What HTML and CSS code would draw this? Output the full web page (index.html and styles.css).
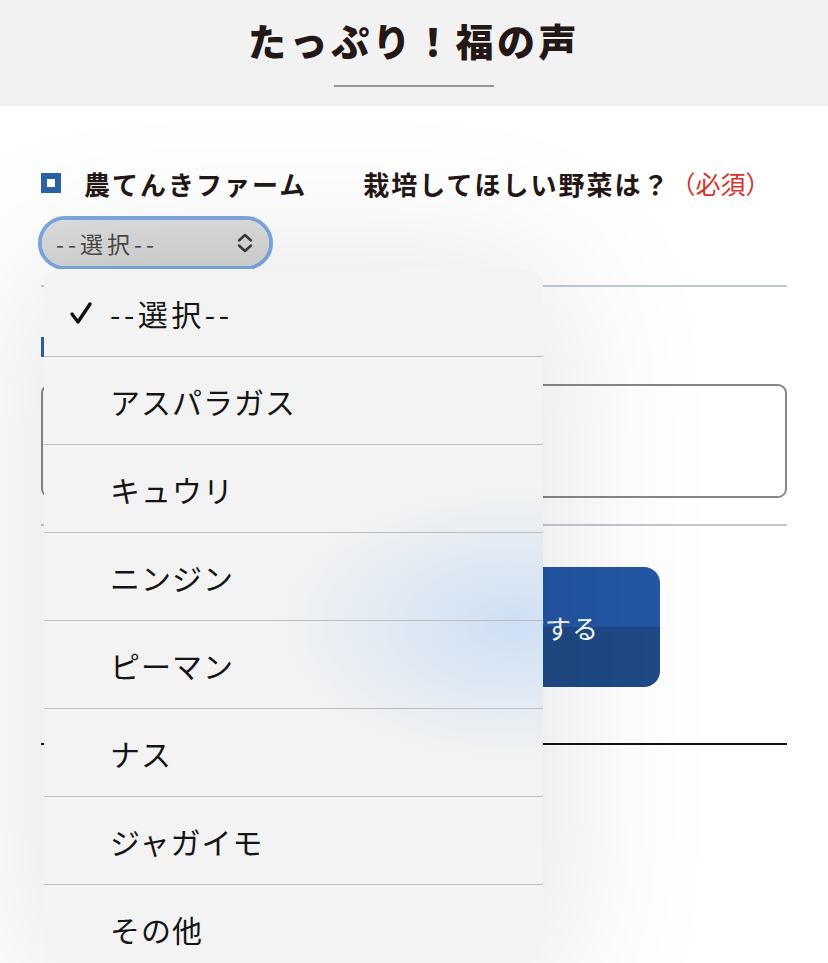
FILE: index.html
```html
<!DOCTYPE html>
<html lang="ja">
<head>
<meta charset="utf-8">
<title>たっぷり！福の声</title>
<link rel="stylesheet" href="styles.css">
</head>
<body>
<header class="hero">
  <h1 class="hero-title">たっぷり！福の声</h1>
  <div class="hero-rule"></div>
</header>
<main class="form">
  <div class="q-label">
    <span class="q-icon"></span>
    <span class="q-farm">農てんきファーム</span>
    <span class="q-text">栽培してほしい野菜は？</span><span class="q-req">（必須）</span>
  </div>
  <div class="select-ring">
    <div class="select">
      <span class="select-value">--選択--</span>
      <svg class="select-chev" width="20" height="22" viewBox="0 0 20 22"><path d="M4 8.5 L10 3 L16 8.5 M4 13.5 L10 19 L16 13.5" fill="none" stroke="#3a3a3a" stroke-width="2.4" stroke-linecap="round" stroke-linejoin="round"/></svg>
    </div>
  </div>
  <div class="rule-light"></div>
  <div class="q-label q-label-2">
    <span class="q-icon"></span>
  </div>
  <div class="textarea"></div>
  <div class="rule-light rule-2"></div>
  <div class="btn-row">
    <div class="btn">送信する</div>
  </div>
  <div class="rule-dark"></div>
</main>

<div class="menu">
  <div class="menu-item selected">
    <svg class="check" width="24" height="24" viewBox="0 0 24 24"><path d="M3 13 L9 21 L21 3" fill="none" stroke="#111" stroke-width="3.4" stroke-linecap="round" stroke-linejoin="round"/></svg>
    <span class="sel-text">--選択--</span>
  </div>
  <div class="menu-item"><span>アスパラガス</span></div>
  <div class="menu-item"><span>キュウリ</span></div>
  <div class="menu-item"><span>ニンジン</span></div>
  <div class="menu-item"><span>ピーマン</span></div>
  <div class="menu-item"><span>ナス</span></div>
  <div class="menu-item"><span>ジャガイモ</span></div>
  <div class="menu-item"><span>その他</span></div>
</div>
</body>
</html>
```

FILE: styles.css
```css
html, body {
  margin: 0;
  padding: 0;
}
body {
  width: 828px;
  height: 963px;
  overflow: hidden;
  position: relative;
  background: #ffffff;
  font-family: "Noto Sans CJK JP", "Noto Sans", sans-serif;
  color: #231815;
}
.hero {
  height: 106px;
  background: #f2f2f2;
  display: flex;
  flex-direction: column;
  align-items: center;
}
.hero-title {
  margin: 14px 0 0 0;
  font-size: 38px;
  line-height: 52px;
  font-weight: 900;
  letter-spacing: 3.5px;
  color: #231815;
}
.hero-rule {
  margin-top: 19px;
  width: 160px;
  height: 2px;
  background: #959595;
}
.form {
  padding: 0 41px;
  display: flex;
  flex-direction: column;
}
.q-label {
  margin-top: 62px;
  height: 30px;
  display: flex;
  align-items: center;
  font-size: 26px;
  font-weight: 700;
  letter-spacing: 2px;
}
.q-icon {
  width: 8px;
  height: 8px;
  border: 6px solid #2c62a6;
  background: #fff;
  flex: none;
  margin-right: 23px;
}
.q-farm {
  margin-right: 56px;
}
.q-req {
  font-weight: 400;
  font-size: 25px;
  letter-spacing: 0;
  color: #d7332c;
}
.select-ring {
  margin-top: 18px;
  margin-left: -3px;
  width: 227px;
  height: 46px;
  border: 4px solid #7ca8e0;
  border-radius: 27px;
}
.select {
  height: 46px;
  border-radius: 23px;
  background: linear-gradient(#dddddd, #d5d5d5);
  display: flex;
  align-items: center;
  justify-content: space-between;
  padding: 0 14px 0 14px;
}
.select-value {
  font-size: 23px;
  letter-spacing: 4px;
  color: #4a4a4a;
}
.rule-light {
  margin-top: 15px;
  height: 2px;
  background: #bccbd8;
}
.q-label-2 {
  margin-top: 45px;
}
.textarea {
  margin-top: 22px;
  height: 110px;
  border: 2px solid #888888;
  border-radius: 9px;
  background: #fff;
}
.rule-2 {
  margin-top: 26px;
}
.btn-row {
  margin-top: 41px;
  display: flex;
  justify-content: flex-end;
  padding-right: 127px;
}
.btn {
  width: 230px;
  height: 120px;
  border-radius: 16px;
  background: linear-gradient(#2457a5 0 50%, #1f4a86 50% 100%);
  color: #fff;
  font-size: 26px;
  display: flex;
  align-items: center;
  justify-content: center;
  letter-spacing: 1px;
}
.rule-dark {
  margin-top: 56px;
  height: 2px;
  background: #151515;
}
.menu {
  position: absolute;
  left: 44px;
  top: 269px;
  width: 499px;
  height: 694px;
  border-radius: 18px;
  overflow: hidden;
  background:
    radial-gradient(ellipse 240px 140px at 470px 355px, rgba(203, 222, 244, 0.95), rgba(203, 222, 244, 0) 100%),
    #f3f3f3;
  box-shadow: 0 10px 160px 20px rgba(0, 0, 0, 0.10);
}
.menu-item {
  height: 87px;
  border-bottom: 1px solid #bcbcbc;
  display: flex;
  align-items: center;
  padding-left: 66px;
  position: relative;
  font-size: 30px;
  letter-spacing: 1px;
  color: #151515;
}
.sel-text {
  letter-spacing: 3.5px;
}
.check {
  position: absolute;
  left: 25px;
  top: 32px;
}
```
